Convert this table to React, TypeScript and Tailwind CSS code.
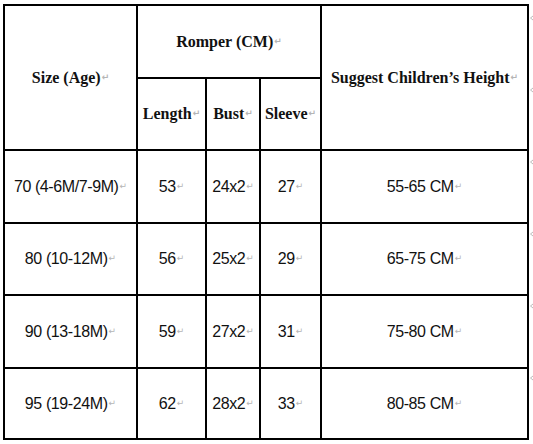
const head = "font-['Liberation_Serif','Times_New_Roman',serif] font-bold text-[16px] text-[#111]"
const body = "font-['Liberation_Sans',Arial,sans-serif] text-[16px] text-[#111] tracking-[-0.4px]"

const rows = [
    { size: "70 (4-6M/7-9M)", length: "53", bust: "24x2", sleeve: "27", height: "55-65 CM" },
    { size: "80 (10-12M)", length: "56", bust: "25x2", sleeve: "29", height: "65-75 CM" },
    { size: "90 (13-18M)", length: "59", bust: "27x2", sleeve: "31", height: "75-80 CM" },
    { size: "95 (19-24M)", length: "62", bust: "28x2", sleeve: "33", height: "80-85 CM" },
]

function Mark() {
    return <span className="font-['DejaVu_Sans',sans-serif] text-[9px] tracking-normal text-[#b5b5b5] ml-[1px]">↵</span>
}

function Cell({ children, className = "" }: { children: React.ReactNode; className?: string }) {
    return (
        <div className={`bg-white flex items-center justify-center whitespace-nowrap ${className}`}>
            {children}
            <Mark />
        </div>
    )
}

// little clipped return arrow beyond the table edge
function EdgeMark() {
    return (
        <svg width="3" height="8" viewBox="0 0 3 8" className="block">
            <path d="M3 2 L0.5 4 L3 6" stroke="#bbb" strokeWidth="1" fill="none" />
        </svg>
    )
}

export default function App() {
    return (
        <div className="w-[533px] h-[444px] bg-white overflow-hidden flex">
            <div className="ml-[3px] mt-[4px] self-start bg-black p-[2px] grid gap-[2px] grid-cols-[131px_67px_52px_59px_205px] grid-rows-[71px_70px_71px_70px_71px_69px]">
                <Cell className={`${head} row-span-2`}>Size (Age)</Cell>
                <Cell className={`${head} col-span-3`}>Romper (CM)</Cell>
                <Cell className={`${head} row-span-2`}>Suggest Children’s Height</Cell>
                <Cell className={head}>Length</Cell>
                <Cell className={head}>Bust</Cell>
                <Cell className={head}>Sleeve</Cell>

                {rows.map((r) => (
                    <>
                        <Cell key={r.size} className={body}>{r.size}</Cell>
                        <Cell className={body}>{r.length}</Cell>
                        <Cell className={body}>{r.bust}</Cell>
                        <Cell className={body}>{r.sleeve}</Cell>
                        <Cell className={body}>{r.height}</Cell>
                    </>
                ))}
            </div>

            <div className="flex flex-col pt-[14px] gap-[64px] pl-[1px]">
                {[0, 1, 2, 3, 4, 5].map((i) => (
                    <EdgeMark key={i} />
                ))}
            </div>
        </div>
    )
}
